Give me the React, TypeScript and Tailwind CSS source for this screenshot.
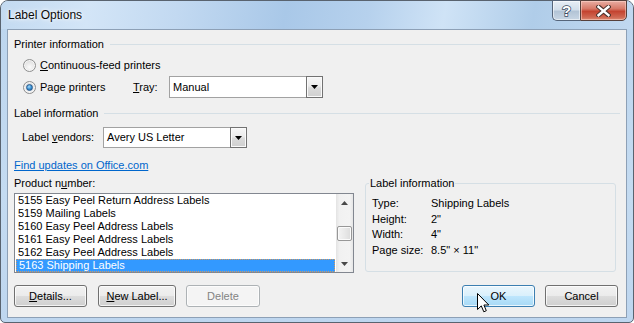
import React from 'react'

const products = [
  '5155 Easy Peel Return Address Labels',
  '5159 Mailing Labels',
  '5160 Easy Peel Address Labels',
  '5161 Easy Peel Address Labels',
  '5162 Easy Peel Address Labels',
  '5163 Shipping Labels',
]

const info = [
  ['Type:', 'Shipping Labels'],
  ['Height:', '2"'],
  ['Width:', '4"'],
  ['Page size:', '8.5" × 11"'],
]

function Radio({ checked }: { checked?: boolean }) {
  return (
    <span className="flex h-[13px] w-[13px] flex-none items-center justify-center rounded-full border border-[#8e8f8f] bg-[radial-gradient(circle_at_50%_65%,#fbfbfb_0%,#e6e6e6_55%,#cdcdcd_100%)] shadow-[inset_0_0_0_1px_#f6f6f6]">
      {checked && (
        <span className="h-[7px] w-[7px] rounded-full border border-[#2a5a8c] bg-[radial-gradient(circle_at_40%_35%,#a8dcfa_0%,#3d93d4_50%,#135797_100%)]" />
      )}
    </span>
  )
}

function Arrow({ up }: { up?: boolean }) {
  return (
    <svg width="7" height="4" viewBox="0 0 7 4">
      <path d={up ? 'M0 4h7L3.5 0z' : 'M0 0h7L3.5 4z'} fill="#4a4a4a" />
    </svg>
  )
}

function Combo({ value, className }: { value: string; className: string }) {
  return (
    <div className={`flex items-stretch border border-[#a2a2a2] bg-white ${className}`}>
      <span className="flex flex-1 items-center pl-[3px]">{value}</span>
      <span className="-m-px flex w-[17px] items-center justify-center border border-[#727272] bg-[linear-gradient(180deg,#f7f7f7_0%,#ebebeb_45%,#dadada_55%,#d0d0d0_100%)] shadow-[inset_0_0_0_1px_#fafafa]">
        <svg width="7" height="4" viewBox="0 0 7 4">
          <path d="M0 0h7L3.5 4z" fill="#000" />
        </svg>
      </span>
    </div>
  )
}

function Heading({ children }: { children: React.ReactNode }) {
  return (
    <div className="flex h-[16px] items-center">
      <span className="leading-[16px]">{children}</span>
      <span className="ml-[6px] h-px flex-1 bg-[#d5dfe5]" />
    </div>
  )
}

function Button({
  children,
  className,
  kind,
}: {
  children: React.ReactNode
  className: string
  kind?: 'hover' | 'disabled'
}) {
  const look =
    kind === 'hover'
      ? 'border-[#3c7fb1] bg-[linear-gradient(180deg,#eaf6fd_0%,#d9f0fc_50%,#bee6fd_50%,#a7d9f5_100%)] text-black'
      : kind === 'disabled'
        ? 'border-[#adb2b5] bg-[#f4f4f4] text-[#838383]'
        : 'border-[#707070] bg-[linear-gradient(180deg,#f2f2f2_0%,#ebebeb_50%,#dddddd_50%,#cfcfcf_100%)] text-black'
  return (
    <div
      className={`relative flex h-[22px] items-center justify-center rounded-[3px] border shadow-[inset_0_0_0_1px_rgba(255,255,255,0.75)] ${look} ${className}`}
    >
      {children}
    </div>
  )
}

export default function App() {
  return (
    <div className="flex h-[323px] w-[634px] flex-col rounded-t-[8px] rounded-b-[5px] border border-[#59636f] bg-[linear-gradient(180deg,#bcd5ee_0%,#c4dbf1_60%,#bed6ef_100%)] font-['Liberation_Sans',Arial,sans-serif] text-[11px] text-black">
      {/* Title bar */}
      <div className="flex h-[28px] flex-none items-start rounded-t-[7px] bg-[linear-gradient(100deg,#c3daf1_0%,#d3e5f7_14%,#c2d9f1_28%,#a9c8e8_45%,#b6d1ed_58%,#cfe3f6_70%,#b0cde9_84%,#c1d8f0_100%)] pr-[6px]">
        <span className="mt-[6px] flex-1 pl-[7px] text-[12px] leading-[16px] text-[#0b0b0b] [text-shadow:0_0_6px_#ffffff,0_0_3px_#ffffff]">
          Label Options
        </span>
        <div className="-mt-px flex h-[21px]">
          <div className="flex w-[28px] items-center justify-center rounded-bl-[5px] border border-r-0 border-[#56657a] bg-[linear-gradient(180deg,#e7eef6_0%,#d3dfeb_45%,#b3c4d6_55%,#c8d6e4_100%)] shadow-[inset_0_0_0_1px_rgba(255,255,255,0.55)]">
            <span className="text-[15px] font-bold leading-none text-white [-webkit-text-stroke:1.5px_#3d4c60] [paint-order:stroke_fill]">
              ?
            </span>
          </div>
          <div className="flex w-[47px] items-center justify-center rounded-br-[5px] border border-[#56403b] bg-[linear-gradient(180deg,#e9aea3_0%,#d77a69_40%,#c44430_55%,#cf6751_85%,#dd8b73_100%)] shadow-[inset_0_0_0_1px_rgba(255,220,210,0.5)]">
            <svg width="15" height="12" viewBox="0 0 15 12">
              <path d="M2.5 1.8L12.5 10.2M12.5 1.8L2.5 10.2" stroke="#48302b" strokeWidth="4.4" strokeLinecap="square" />
              <path d="M2.5 1.8L12.5 10.2M12.5 1.8L2.5 10.2" stroke="#ffffff" strokeWidth="2.4" strokeLinecap="square" />
            </svg>
          </div>
        </div>
      </div>

      {/* Client area */}
      <div className="mx-[6px] mb-[4px] flex flex-1 flex-col border border-[#8da0b6] bg-[#f0f0f0] px-[6px] pt-[6px]">
        <Heading>Printer information</Heading>

        <div className="mt-[5px] flex h-[16px] items-center pl-[9px]">
          <Radio />
          <span className="ml-[4px]">
            <u>C</u>ontinuous-feed printers
          </span>
        </div>

        <div className="mt-[3px] flex h-[22px] items-center pl-[9px]">
          <div className="flex w-[110px] items-center">
            <Radio checked />
            <span className="ml-[4px]">
              Pa<u>g</u>e printers
            </span>
          </div>
          <span className="w-[36px]">
            <u>T</u>ray:
          </span>
          <Combo value="Manual" className="h-[22px] w-[154px]" />
        </div>

        <div className="mt-[7px]">
          <Heading>Label information</Heading>
        </div>

        <div className="mt-[6px] flex h-[21px] items-center pl-[8px]">
          <span className="w-[81px]">
            Label <u>v</u>endors:
          </span>
          <Combo value="Avery US Letter" className="h-[21px] w-[144px]" />
        </div>

        <a className="mt-[9px] h-[16px] self-start leading-[16px] text-[#0066cc] underline">
          Find updates on Office.com
        </a>

        <div className="mt-[2px] flex items-start">
          <div className="flex w-[340px] flex-col">
            <span className="h-[16px] leading-[16px]">
              Product n<u>u</u>mber:
            </span>
            <div className="mt-[2px] flex h-[80px] border border-[#828790] bg-white">
              <div className="flex flex-1 flex-col">
                {products.map((p, i) =>
                  i === products.length - 1 ? (
                    <div
                      key={p}
                      className="mx-px h-[13px] border border-dotted border-[#d09a62] bg-[#3399ff] pl-[2px] leading-[11px] text-white"
                    >
                      {p}
                    </div>
                  ) : (
                    <div key={p} className="h-[13px] pl-[3px] leading-[13px]">
                      {p}
                    </div>
                  ),
                )}
              </div>
              <div className="flex w-[17px] flex-col bg-[linear-gradient(90deg,#e3e3e3_0%,#f1f1f1_20%,#f3f3f3_80%,#e6e6e6_100%)]">
                <div className="flex h-[17px] items-center justify-center">
                  <Arrow up />
                </div>
                <div className="flex-1 px-px">
                  <div className="mt-[15px] h-[15px] rounded-[2px] border border-[#979797] bg-[linear-gradient(90deg,#f4f4f4_0%,#e9e9e9_50%,#dcdcdc_100%)] shadow-[inset_0_0_0_1px_#fbfbfb]" />
                </div>
                <div className="flex h-[17px] items-center justify-center">
                  <Arrow />
                </div>
              </div>
            </div>
          </div>

          <fieldset className="ml-[11px] h-[97px] w-[251px] rounded-[3px] border border-[#d5dfe5] pl-[6px]">
            <legend className="ml-[-3px] px-[1px] leading-[16px]">Label information</legend>
            <div className="grid grid-cols-[59px_1fr] pt-[5px] leading-[15.7px]">
              {info.map(([k, v]) => (
                <React.Fragment key={k}>
                  <span>{k}</span>
                  <span>{v}</span>
                </React.Fragment>
              ))}
            </div>
          </fieldset>
        </div>

        <div className="mr-[2px] mt-[12px] flex items-center">
          <Button className="w-[73px]">
            <span>
              <u>D</u>etails...
            </span>
          </Button>
          <Button className="ml-[11px] w-[78px]">
            <span>
              <u>N</u>ew Label...
            </span>
          </Button>
          <Button className="ml-[10px] w-[74px]" kind="disabled">
            Delete
          </Button>
          <div className="flex-1" />
          <Button className="w-[73px]" kind="hover">
            OK
            <svg
              className="absolute left-[14px] top-[7px]"
              width="13"
              height="20"
              viewBox="0 0 13 20"
            >
              <path
                d="M0.5 0.5V16.5L4.3 12.9L6.8 18.8L9.3 17.7L6.9 12H11.8Z"
                fill="#fff"
                stroke="#000"
                strokeWidth="1"
                strokeLinejoin="miter"
              />
            </svg>
          </Button>
          <Button className="ml-[10px] w-[73px]">Cancel</Button>
        </div>
      </div>
    </div>
  )
}
